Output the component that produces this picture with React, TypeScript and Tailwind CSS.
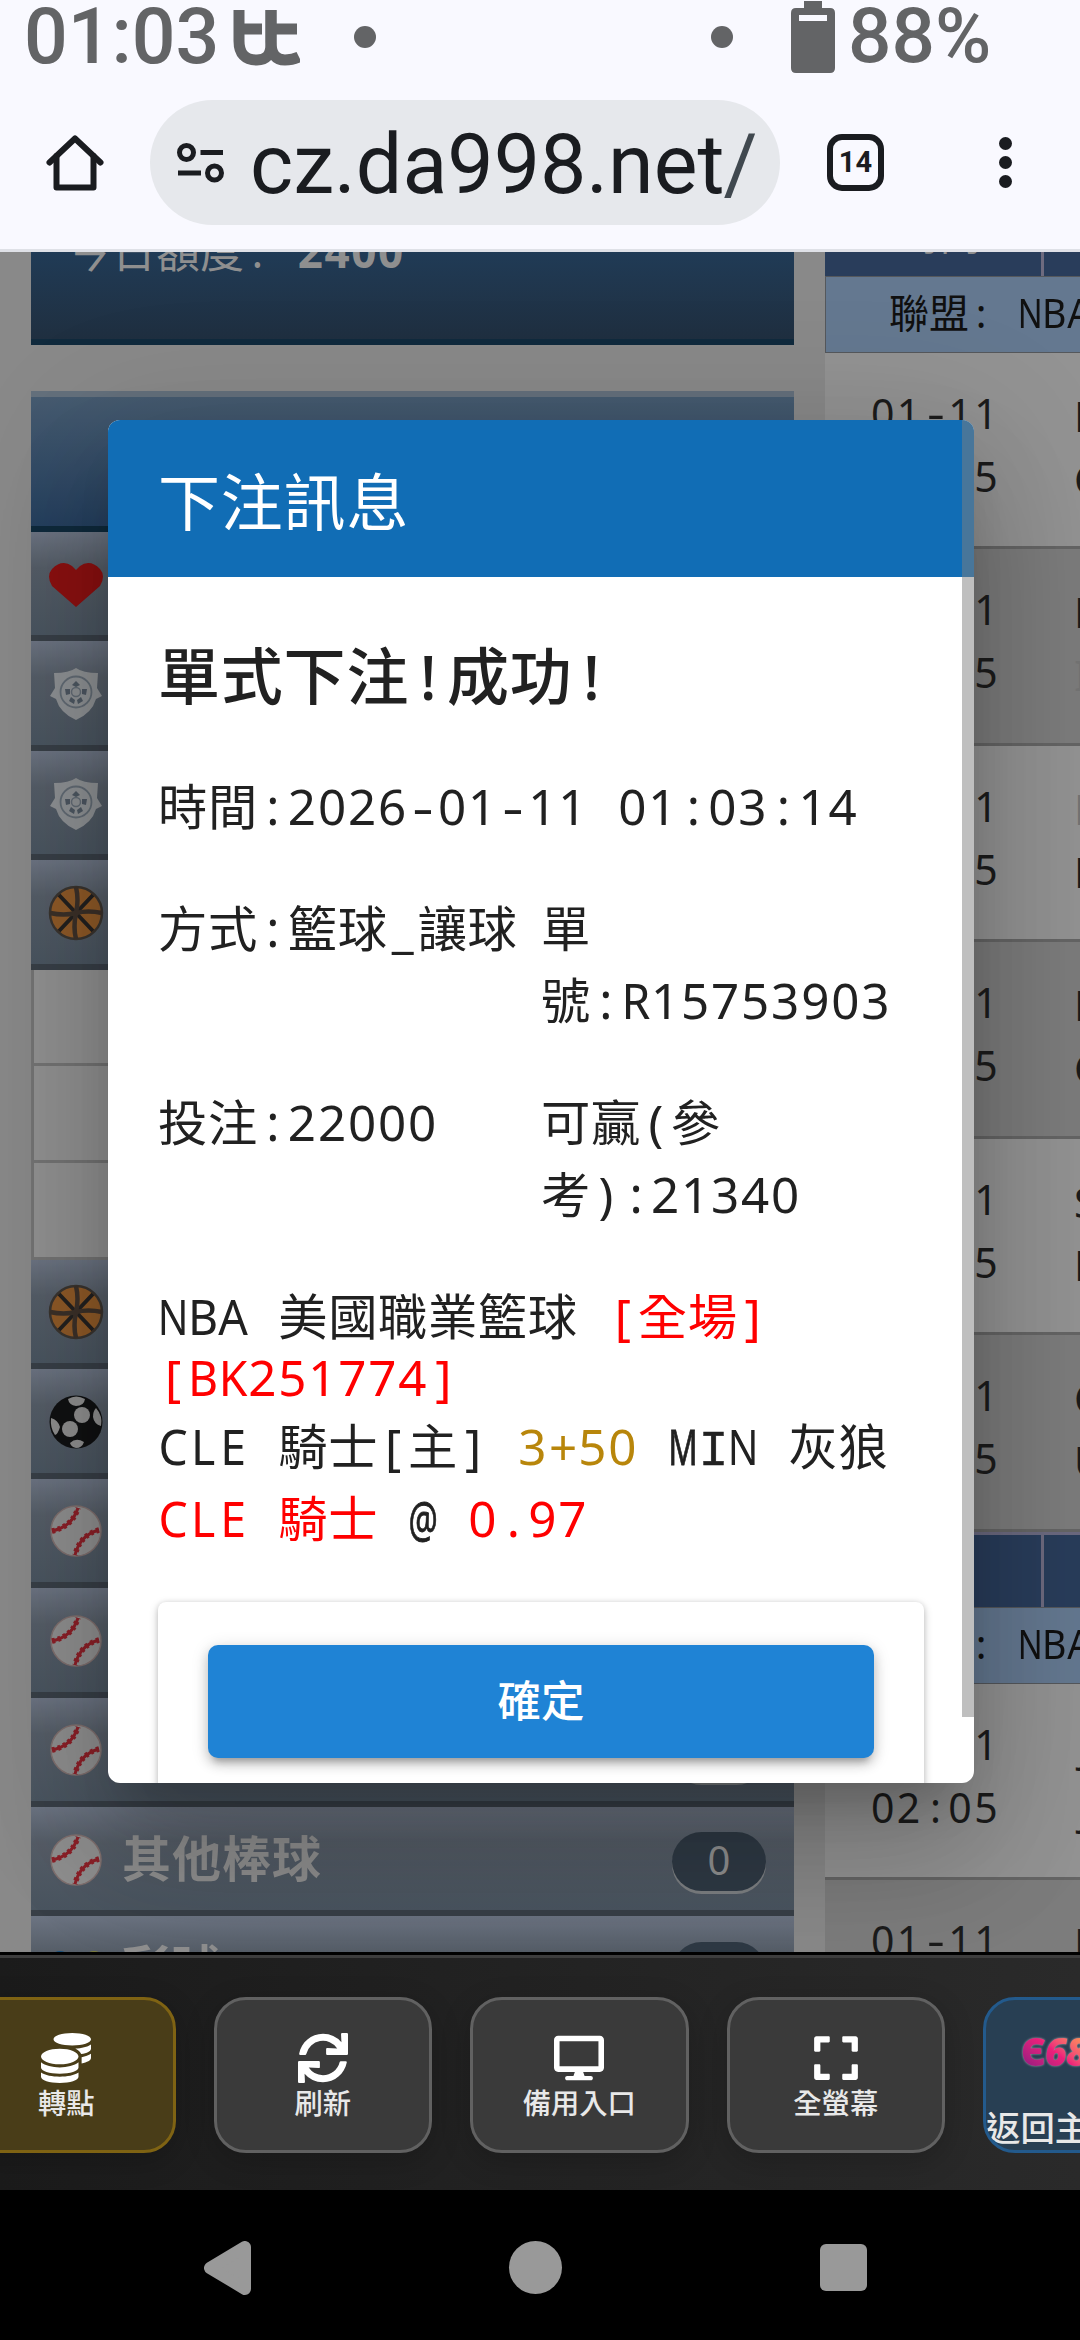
import { FaCoins, FaDesktop, FaExpand, FaSync } from 'react-icons/fa'

interface MonoProps {
  children: string
  wide?: boolean
}

// Latin characters sit in equal cells between full width Chinese ones
function Mono({ children, wide = false }: MonoProps) {
  const runs = children.match(/\d+|[\x20-\x7e]|[^\x20-\x7e]+/g) ?? []
  return (
    <span className="whitespace-pre">
      {runs.map((run, i) => {
        if (/^\d/.test(run)) {
          return <span key={i} className={wide ? 'tracking-[0.057em]' : 'tracking-[0.037em]'}>{run}</span>
        }
        if (/^[\x20-\x7e]/.test(run)) {
          let shape = ''
          if (/[M@]/.test(run)) shape = 'scale-x-[0.66] [-webkit-text-stroke:0.8px_currentColor]'
          else if (run === 'N') shape = 'scale-x-[0.82]'
          else if (run === 'I') shape = 'font-["Liberation_Mono"] [-webkit-text-stroke:0.5px_currentColor]'
          else if (run === '-') shape = 'scale-x-[1.35]'
          else if (/[A-Z]/.test(run)) shape = 'scale-x-[0.94]'
          return (
            <span key={i} className={`inline-flex justify-center tracking-normal ${wide ? 'w-[0.629em]' : 'w-[0.61em]'} ${shape}`}>
              {run}
            </span>
          )
        }
        return <span key={i}>{run}</span>
      })}
    </span>
  )
}

function StatusBar() {
  return (
    <div className="h-[74px] flex items-start text-[#636466] pl-[24px] shrink-0">
      <span className="w-[209px] text-[77px] leading-[74px] font-medium">01:03</span>
      <svg className="mt-[10px] w-[67px] h-[56px]" viewBox="0 0 67 56" fill="none" stroke="currentColor" strokeWidth="11">
        <path d="M6 0V31Q6 50 24 50Q38 50 38 34V0" />
        <path d="M38 0V32Q38 50 52 50Q60 50 66 47" />
        <path d="M6 19H29M38 19H64" />
      </svg>
      <span className="mt-[26px] ml-[54px] size-[22px] rounded-full bg-[#636466]" />
      <span className="mt-[26px] ml-[335px] size-[22px] rounded-full bg-[#636466]" />
      <svg className="ml-[58px] w-[44px] h-[74px]" viewBox="0 0 44 74" fill="currentColor">
        <path fillRule="evenodd" d="M13 1h18v7h8q5 0 5 5v55q0 5-5 5H5q-5 0-5-5V13q0-5 5-5h8zM8 15v6h28v-6z" />
      </svg>
      <span className="ml-[13px] text-[76.500px] leading-[73px] font-medium">88%</span>
    </div>
  )
}

function AddressBar() {
  return (
    <div className="h-[178px] flex items-start border-b-[3px] border-[#dfe1e7] pt-[26px] shrink-0">
      <div className="w-[150px] h-[125px] flex items-center justify-center">
        <svg className="w-[60px] h-[60px]" viewBox="0 0 60 60" fill="none" stroke="#1a1c20" strokeWidth="6" strokeLinecap="round" strokeLinejoin="round">
          <path d="M4.500 29.500 30 5.500l25.500 24" />
          <path d="M11.500 23v31.500h37V23" />
        </svg>
      </div>
      <div className="w-[630px] h-[125px] rounded-full bg-[#e6e8ec] flex items-center pl-[26px]">
        <svg className="w-[50px] h-[42px] shrink-0" viewBox="0 0 50 42" fill="none" stroke="#1a1c20" strokeWidth="5">
          <circle cx="10.500" cy="10.500" r="7" />
          <circle cx="38.500" cy="31" r="7" />
          <path d="M24.500 10.500H47M2 31h23" />
        </svg>
        <span className="ml-[24px] pt-[5px] w-[505px] overflow-hidden whitespace-nowrap text-[82.500px] leading-[120px] text-[#1a1c20]">
          cz.da998.net<span className="-ml-[1px] tracking-[-4px] text-[#40484f]">/g</span>
        </span>
      </div>
      <div className="ml-[47px] mt-[34px] size-[57px] rounded-[15px] border-[6px] border-[#1a1c20] flex items-center justify-center text-[29px] leading-none font-bold text-[#1a1c20]">
        14
      </div>
      <div className="ml-[115px] mt-[37px] flex flex-col gap-[6px]">
        <span className="size-[13px] rounded-full bg-[#1a1c20]" />
        <span className="size-[13px] rounded-full bg-[#1a1c20]" />
        <span className="size-[13px] rounded-full bg-[#1a1c20]" />
      </div>
    </div>
  )
}

function Heart() {
  return (
    <svg className="mt-[3px] w-[56px] h-[46px]" viewBox="0 0 56 46" fill="#8c1010">
      <path d="M28 45 4 24Q-2 14 4 7Q14-3 24 4L28 8L32 4Q42-3 52 7Q58 14 52 24Z" />
    </svg>
  )
}

function Shield() {
  return (
    <svg className="mt-[2px] w-[52px] h-[52px]" viewBox="0 0 52 52" fill="#8e9194">
      <path d="M26 0Q33 5 48 5L47 20 52 28 46 31Q42 45 26 52Q10 45 6 31L0 28 5 20 4 5Q19 5 26 0Z" />
      <circle cx="26" cy="24" r="15.500" fill="none" stroke="#626b74" strokeWidth="1.800" />
      <g fill="#4d5761">
        <path d="m26 13 4 4-4 2-4-2zM15 21l5 0 0 5-4 1zM37 21l-5 0 0 5 4 1zM19 33l2-4 4 3-1 4zM33 33l-2-4-4 3 1 4z" />
      </g>
      <circle cx="26" cy="24" r="4.500" fill="none" stroke="#626b74" strokeWidth="1.500" />
    </svg>
  )
}

function Basketball() {
  return (
    <svg className="mt-[2px] w-[56px] h-[56px]" viewBox="0 0 56 56" fill="none" stroke="#232120" strokeWidth="4">
      <circle cx="28" cy="28" r="26" fill="#8f5a28" stroke="#3a3530" strokeWidth="2.500" />
      <path d="M11 10 45 46M45 10 11 46" />
      <path d="M28 2Q31 15 28 28Q25 42 28 54M2 28Q16 31 28 28Q40 25 54 28" stroke="#3c3129" strokeWidth="4.500" />
    </svg>
  )
}

function Soccer() {
  return (
    <svg className="mt-[2px] w-[56px] h-[56px]" viewBox="0 0 56 56">
      <circle cx="28" cy="28" r="26.500" fill="#101112" />
      <g fill="#8f8f8f">
        <circle cx="34" cy="21" r="8" />
        <circle cx="22" cy="35" r="8" />
        <path d="M20 5Q28 0 37 5Q36 12 28 12Q21 11 20 5ZM48 14Q55 22 53 32Q46 30 45 23Q45 17 48 14ZM3 24Q10 26 12 33Q10 40 7 41Q2 34 3 24ZM22 49Q28 43 36 48Q34 54 28 54Q23 53 22 49Z" />
      </g>
    </svg>
  )
}

function Baseball() {
  return (
    <svg className="mt-[2px] w-[52px] h-[52px]" viewBox="0 0 52 52" fill="none" stroke="#8c2028" strokeWidth="3">
      <circle cx="26" cy="26" r="25" fill="#8f8f8f" stroke="#80706f" strokeWidth="1.500" />
      <path d="M2 26Q22 22 28 3M49 25Q30 30 25 50" />
      <path d="M2 26Q22 22 28 3M49 25Q30 30 25 50" strokeWidth="5.500" strokeDasharray="3 3" />
    </svg>
  )
}

function Lottery() {
  return (
    <svg className="w-[52px] h-[52px]" viewBox="0 0 52 52">
      <circle cx="10" cy="20" r="11" fill="#17507c" />
      <circle cx="44" cy="20" r="11" fill="#7c7c38" />
    </svg>
  )
}

interface MenuRowProps {
  icon: React.ReactNode
  label?: string
}

function MenuRow({ icon, label = '' }: MenuRowProps) {
  return (
    <div className="h-[109.450px] shrink-0 flex items-center border-b-[6px] border-[#383f47] bg-linear-to-b from-[#6c7482] via-[#555d67] via-35% to-[#4a5560] pl-[14px] pr-[28px]">
      <div className="w-[62px] flex justify-center">{icon}</div>
      <span className="ml-[15px] -mt-[2px] text-[49px] leading-[60px] tracking-[1px] font-bold text-[#8f8f8f]">{label}</span>
      <span className="ml-auto mt-[6px] w-[94px] h-[59px] rounded-full bg-[#2f3a45] shadow-[0_3px_0_#7d8083] flex items-center justify-center pb-[4px] text-[40px] leading-none text-[#909090]">
        0
      </span>
    </div>
  )
}

function SideMenu() {
  return (
    <div className="w-[763px] shrink-0 flex flex-col">
      <div className="h-[93px] shrink-0 overflow-hidden flex flex-col border-b-[6px] border-[#102a3d] bg-linear-to-b from-[#203b56] to-[#1f2f40] text-[#8f8f8f]">
        <div className="-mt-[26px] pl-[37px] text-[44px] leading-[50px]">
          <Mono>今日額度: </Mono>
          <b><Mono>2400</Mono></b>
        </div>
      </div>
      <div className="mt-[46px] h-[141px] shrink-0 border-t-[6px] border-[#64707c] border-b-[6px] border-b-[#0f2a3c] bg-linear-to-b from-[#465b70] to-[#25405f]" />
      <MenuRow icon={<Heart />} />
      <MenuRow icon={<Shield />} />
      <MenuRow icon={<Shield />} />
      <MenuRow icon={<Basketball />} />
      <div className="border-l-[3px] border-[#747474] bg-[#919191]">
        <div className="h-[96.500px] border-b-[3px] border-[#747474]" />
        <div className="h-[96.500px] border-b-[3px] border-[#747474]" />
        <div className="h-[97px] border-b-[3px] border-[#747474]" />
      </div>
      <MenuRow icon={<Basketball />} />
      <MenuRow icon={<Soccer />} />
      <MenuRow icon={<Baseball />} />
      <MenuRow icon={<Baseball />} />
      <MenuRow icon={<Baseball />} />
      <MenuRow icon={<Baseball />} label="其他棒球" />
      <MenuRow icon={<Lottery />} label="彩球" />
    </div>
  )
}

interface Game {
  teams: [string, string]
  faded?: number
}

const firstGames: Game[] = [
  { teams: ['N', 'C'] },
  { teams: ['N', 'I'], faded: 1 },
  { teams: ['N', 'N'], faded: 0 },
  { teams: ['N', 'C'] },
  { teams: ['S', 'N'] },
  { teams: ['C', 'U'] },
]

const secondGames: Game[] = [{ teams: ['J', 'J'] }, { teams: ['N', 'N'] }]

function GameRows({ games }: { games: Game[] }) {
  return games.map((game, i) => (
    <div key={i} className="h-[196.600px] shrink-0 flex border-b-[3px] border-[#656565] odd:bg-[#939393] even:bg-[#7c7c7c] pt-[29px] text-[41px] leading-[63px] text-[#1c1c1c]">
      <div className="w-[216px] pl-[46px] flex flex-col">
        <Mono wide>01-11</Mono>
        <Mono wide>02:05</Mono>
      </div>
      <div className="pl-[33px] pt-[3px] flex flex-col">
        {game.teams.map((team, n) => (
          <span key={n} className={game.faded === n ? 'text-[#747474]' : team === 'J' ? 'pl-[5px]' : ''}>{team}</span>
        ))}
      </div>
    </div>
  ))
}

function LeagueRow() {
  return (
    <div className="h-[76.500px] shrink-0 border border-[#55585c] bg-[#647890] pl-[63px] text-[40px] leading-[72px] whitespace-nowrap text-[#101010]">
      <Mono>聯盟: NBA</Mono>
    </div>
  )
}

function OddsTable() {
  return (
    <div className="ml-[31px] w-[300px] shrink-0 flex flex-col">
      <div className="h-[24px] shrink-0 flex bg-[#293d5b]">
        <div className="w-[219px] h-full overflow-hidden flex items-end justify-center border-r-[3px] border-[#6e6b7f] pl-[14px] text-[40px] leading-[40px] text-[#8f8f8f]">
          <span className="mb-[21px]">時間</span>
        </div>
      </div>
      <LeagueRow />
      <div className="flex flex-col"><GameRows games={firstGames} /></div>
      <div className="h-[75px] shrink-0 flex border-t-[3px] border-[#6c6a80] bg-[#293d5b]">
        <div className="w-[219px] border-r-[3px] border-[#6e6b7f]" />
      </div>
      <LeagueRow />
      <div className="flex flex-col"><GameRows games={secondGames} /></div>
    </div>
  )
}

function BetDialog() {
  return (
    <div className="absolute left-[108px] top-[168px] w-[866px] h-[1363px] rounded-[12px] overflow-hidden bg-white text-[#212121] shadow-[0_33px_45px_-21px_rgba(0,0,0,0.2),0_72px_114px_9px_rgba(0,0,0,0.14),0_27px_138px_24px_rgba(0,0,0,0.12)]">
      <div className="h-[157px] flex items-center bg-[#116db5] pl-[50px] pt-[7px]">
        <h2 className="text-[62px] leading-[96px] tracking-[0.800px] text-white">下注訊息</h2>
      </div>
      <div className="px-[50px] pt-[51px] text-[49.300px] leading-[72px]">
        <h3 className="text-[62px] leading-[96px] tracking-[0.800px] font-medium"><Mono>單式下注!成功!</Mono></h3>
        <div className="mt-[46px] flex flex-col gap-[50px] tracking-[0.600px]">
          <div><Mono>時間:2026-01-11 01:03:14</Mono></div>
          <div className="grid grid-cols-2">
            <div><Mono>方式:籃球_讓球</Mono></div>
            <div className="flex flex-col">
              <Mono>單</Mono>
              <Mono>號:R15753903</Mono>
            </div>
          </div>
          <div className="grid grid-cols-2">
            <div><Mono>投注:22000</Mono></div>
            <div className="flex flex-col">
              <Mono>可贏(參</Mono>
              <Mono>考):21340</Mono>
            </div>
          </div>
          <div>
            <div className="h-[72px]">
              <Mono>NBA 美國職業籃球 </Mono>
              <span className="text-[#ff0000]"><Mono>[全場]</Mono></span>
            </div>
            <div className="h-[58px] leading-[49px] text-[#ff0000]"><Mono>[BK251774]</Mono></div>
            <div className="h-[72px]">
              <Mono>CLE 騎士[主] </Mono>
              <span className="text-[#b8860b]"><Mono>3+50</Mono></span>
              <Mono> MIN 灰狼</Mono>
            </div>
            <div className="h-[72px]">
              <span className="text-[#ff0000]"><Mono>CLE 騎士</Mono></span>
              <Mono> @ </Mono>
              <span className="text-[#ff0000]"><Mono>0.97</Mono></span>
            </div>
          </div>
        </div>
        <div className="mt-[48px] h-[260px] rounded-[8px] bg-white px-[50px] pt-[43px] shadow-[0_3px_9px_rgba(0,0,0,0.25),0_0_5px_rgba(0,0,0,0.08)]">
          <button className="block w-full h-[113px] rounded-[10px] bg-[#1f83d5] pb-[4px] text-[43.500px] font-medium text-white shadow-[0_9px_6px_-6px_rgba(0,0,0,0.2),0_6px_12px_rgba(0,0,0,0.18),0_3px_18px_rgba(0,0,0,0.14)]">
            確定
          </button>
        </div>
      </div>
      <div className="absolute right-0 top-0 w-[12px] h-[1297px] bg-[#808080]/50" />
    </div>
  )
}

interface ToolButtonProps {
  icon: React.ReactNode
  label: string
  gold?: boolean
}

function ToolButton({ icon, label, gold = false }: ToolButtonProps) {
  return (
    <div className={`w-[218.500px] h-[156px] shrink-0 rounded-[32px] border-[3px] flex flex-col items-center pt-[33px] text-[50px] text-white shadow-[0_8px_30px_rgba(0,0,0,0.2)] ${gold ? 'border-[#7f6313] bg-[#493d18]' : 'border-[#616161] bg-[#3a3a3a]'}`}>
      {icon}
      <span className="mt-[2px] text-[28.300px] leading-[36px] font-medium text-[#e8e8e8]">{label}</span>
    </div>
  )
}

function ToolBar() {
  return (
    <div className="h-[238px] shrink-0 border-t-[3px] border-black">
      <div className="h-[235px] overflow-hidden flex gap-[38px] border-t-[3px] border-[#3d3d3d] bg-linear-to-r from-[#1b1b1b] to-[#2a2a2a] pt-[39px]">
        <div className="-ml-[43px] flex shrink-0">
          <ToolButton gold icon={<FaCoins />} label="轉點" />
        </div>
        <ToolButton icon={<FaSync />} label="刷新" />
        <ToolButton icon={<FaDesktop />} label="備用入口" />
        <ToolButton icon={<FaExpand />} label="全螢幕" />
        <div className="w-[218.500px] h-[156px] shrink-0 rounded-[32px] border-[3px] border-[#235a8c] bg-[#283f53] overflow-hidden flex flex-col">
          <span className='h-[108px] pl-[35px] pt-[31px] text-[38px] leading-[40px] font-black tracking-[-1px] font-["Noto_Sans"] drop-shadow-[0_0_1px_#a9a9b0]'>
            <span className="bg-linear-to-tr from-[#7a1080] via-[#ee1f7a] to-[#ffb030] bg-clip-text text-transparent">
              Є<i>68</i>
            </span>
          </span>
          <span className="mt-[1px] whitespace-nowrap text-[34.400px] leading-[44px] font-medium text-[#e8e8e8]">返回主頁</span>
        </div>
      </div>
    </div>
  )
}

function NavBar() {
  return (
    <div className="h-[150px] shrink-0 bg-black flex items-center pl-[204px] pt-[5px]">
      <svg className="w-[47px] h-[54px]" viewBox="0 0 47 54" fill="#999" stroke="#999" strokeWidth="12" strokeLinejoin="round">
        <path d="M6 27 41 6v42z" />
      </svg>
      <span className="ml-[258px] size-[53px] rounded-full bg-[#999]" />
      <span className="ml-[258px] size-[47px] rounded-[6px] bg-[#999]" />
    </div>
  )
}

export default function App() {
  return (
    <div className='w-[1080px] h-[2340px] overflow-hidden flex flex-col bg-[#f9f9ff] font-["Noto_Sans","Noto_Sans_CJK_TC",sans-serif]'>
      <div className="font-[Roboto,sans-serif]">
        <StatusBar />
        <AddressBar />
      </div>
      <div className="relative h-[1700px] shrink-0 overflow-hidden flex bg-[#898989] pl-[31px]">
        <SideMenu />
        <OddsTable />
        <BetDialog />
      </div>
      <ToolBar />
      <NavBar />
    </div>
  )
}
